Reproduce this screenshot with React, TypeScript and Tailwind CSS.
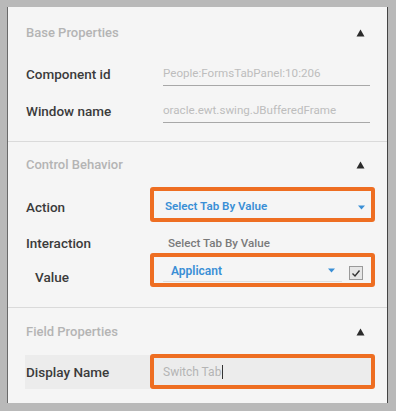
import React from "react";

const Tri = () => (
  <svg width="9" height="8" viewBox="0 0 9 8" className="block">
    <polygon points="4.5,0.5 8.5,7.5 0.5,7.5" fill="#2b2b2b" />
  </svg>
);

const Caret = () => (
  <svg width="7" height="5" viewBox="0 0 7 5" className="block">
    <polygon points="0,0.5 7,0.5 3.5,4.5" fill="#3a8fd6" />
  </svg>
);

const Header = ({ title }: { title: string }) => (
  <div className="flex h-[24px] items-center justify-between pl-[18px] pr-[22px]">
    <span className="text-[13px] font-medium text-[#b4b4b4]">{title}</span>
    <Tri />
  </div>
);

export default function App() {
  return (
    <div
      className="h-[411px] w-[396px] bg-[#b9b9b9] pb-[8px] pl-[7px] pr-[8px] pt-[7px]"
      style={{ fontFamily: "Roboto, 'Liberation Sans', sans-serif" }}
    >
      <div className="flex h-full flex-col border-l border-r border-l-[#6a6a6a] border-r-[#444] bg-[#f5f5f5]">
        {/* Base Properties */}
        <div className="mt-[14px]">
          <Header title="Base Properties" />
        </div>
        <div className="mt-[11px]">
          <div className="flex h-[36px] items-start pl-[18px]">
            <span className="mt-[8px] w-[137px] text-[13.5px] leading-[20px] font-medium text-[#3b3b3b]">Component id</span>
            <div className="mt-[7px] flex h-[23px] w-[207px] items-center border-b-[1.5px] border-[#a8a8a8] text-[11.6px] text-[#bdbdbd]">
              People:FormsTabPanel:10:206
            </div>
          </div>
          <div className="mt-[1px] flex h-[36px] items-start pl-[18px]">
            <span className="mt-[8px] w-[137px] text-[13.5px] leading-[20px] font-medium text-[#3b3b3b]">Window name</span>
            <div className="mt-[7px] flex h-[23px] w-[207px] items-center border-b-[1.5px] border-[#a8a8a8] text-[11.6px] text-[#bdbdbd]">
              oracle.ewt.swing.JBufferedFrame
            </div>
          </div>
        </div>
        <div className="mt-[12px] h-px bg-[#dadada]" />

        {/* Control Behavior */}
        <div className="mt-[11px]">
          <Header title="Control Behavior" />
        </div>
        <div className="mt-[10px] flex h-[35px] items-start pl-[18px]">
          <span className="mt-[10px] w-[124px] text-[13.5px] leading-[20px] font-medium text-[#3b3b3b]">Action</span>
          <div className="flex h-[35px] w-[225px] items-center justify-between rounded-[3px] border-4 border-[#ee6e22] pl-[11px] pr-[6px] pt-[5px]">
            <span className="text-[11.6px] font-semibold text-[#3a8fd6]">Select Tab By Value</span>
            <Caret />
          </div>
        </div>
        <div className="flex h-[31px] items-start pl-[18px]">
          <span className="mt-[11px] w-[142px] text-[13.5px] leading-[20px] font-medium text-[#3b3b3b]">Interaction</span>
          <span className="mt-[11px] text-[11.6px] leading-[20px] font-medium text-[#7a7a7a]">Select Tab By Value</span>
        </div>
        <div className="flex h-[34px] items-start pl-[18px]">
          <span className="mt-[14px] w-[124px] pl-[9px] text-[13.5px] leading-[20px] font-medium text-[#3b3b3b]">Value</span>
          <div className="flex h-[34px] w-[225px] items-start rounded-[3px] border-4 border-[#ee6e22]">
            <div className="ml-[9px] mt-[3px] flex h-[22px] w-[179px] items-center justify-between border-b border-[#dedede] pl-[8px] pr-[7px]">
              <span className="text-[12px] font-semibold text-[#3a8fd6]">Applicant</span>
              <Caret />
            </div>
            <div className="ml-[7px] mt-[9px] flex h-[14px] w-[14px] items-center justify-center border border-[#9a9a9a] bg-[#e6e6e6]">
              <svg width="10" height="9" viewBox="0 0 10 9">
                <path d="M1.5 4.5 L4 7 L8.5 1.5" stroke="#333" strokeWidth="1.4" fill="none" />
              </svg>
            </div>
          </div>
        </div>
        <div className="mt-[20px] h-px bg-[#dadada]" />

        {/* Field Properties */}
        <div className="mt-[12px]">
          <Header title="Field Properties" />
        </div>
        <div className="mt-[10px] flex h-[35px] items-stretch pl-[17px]">
          <div className="mt-[1px] flex w-[125px] items-center bg-[#ececec] pl-[1px]">
            <span className="text-[13.5px] font-medium text-[#3b3b3b]">Display Name</span>
          </div>
          <div className="flex w-[225px] items-center rounded-[3px] border-4 border-[#ee6e22] bg-[#ececec] pl-[9px]">
            <span className="text-[12px] text-[#b4b4b4]">Switch Tab</span>
            <span className="ml-[1px] h-[14px] w-px bg-[#333]" />
          </div>
        </div>
      </div>
    </div>
  );
}
